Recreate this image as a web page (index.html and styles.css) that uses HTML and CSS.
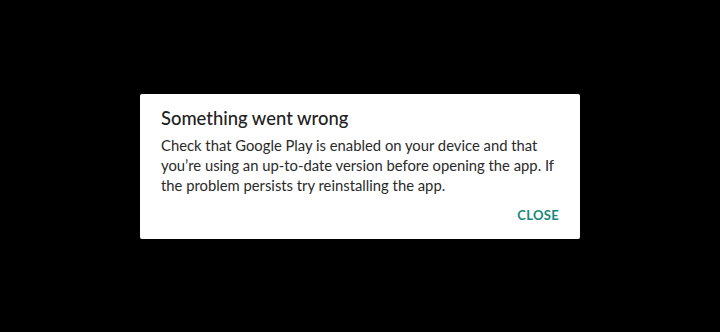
FILE: index.html
```html
<!DOCTYPE html>
<html>
<head>
<meta charset="utf-8">
<link rel="stylesheet" href="styles.css">
</head>
<body>
<div class="screen">
  <div class="dialog">
    <h1 class="title">Something went wrong</h1>
    <p class="message">Check that Google Play is enabled on your device and that you’re using an up-to-date version before opening the app. If the problem persists try reinstalling the app.</p>
    <div class="actions">
      <button class="btn">CLOSE</button>
    </div>
  </div>
</div>
</body>
</html>
```

FILE: styles.css
```css
html, body {
  margin: 0;
  padding: 0;
  background: #000;
}
.screen {
  width: 720px;
  height: 332px;
  display: flex;
  align-items: center;
  justify-content: center;
}
.dialog {
  width: 440px;
  height: 145px;
  box-sizing: border-box;
  background: #fff;
  border-radius: 2px;
  padding: 13px 19px 0 21px;
  font-family: Lato, "Open Sans", sans-serif;
  color: #212121;
}
.title {
  margin: 0;
  font-size: 18.4px;
  font-weight: 500;
  line-height: 22px;
  color: #222;
}
.message {
  margin: 6px 0 0 0;
  font-size: 14.8px;
  line-height: 20px;
  color: #2a2a2a;
}
.actions {
  display: flex;
  justify-content: flex-end;
  margin-top: 12px;
  padding-right: 2px;
}
.btn {
  border: 0;
  background: none;
  padding: 0;
  font-family: inherit;
  font-weight: 700;
  font-size: 13px;
  color: #17897c;
  letter-spacing: 0.3px;
}
```
